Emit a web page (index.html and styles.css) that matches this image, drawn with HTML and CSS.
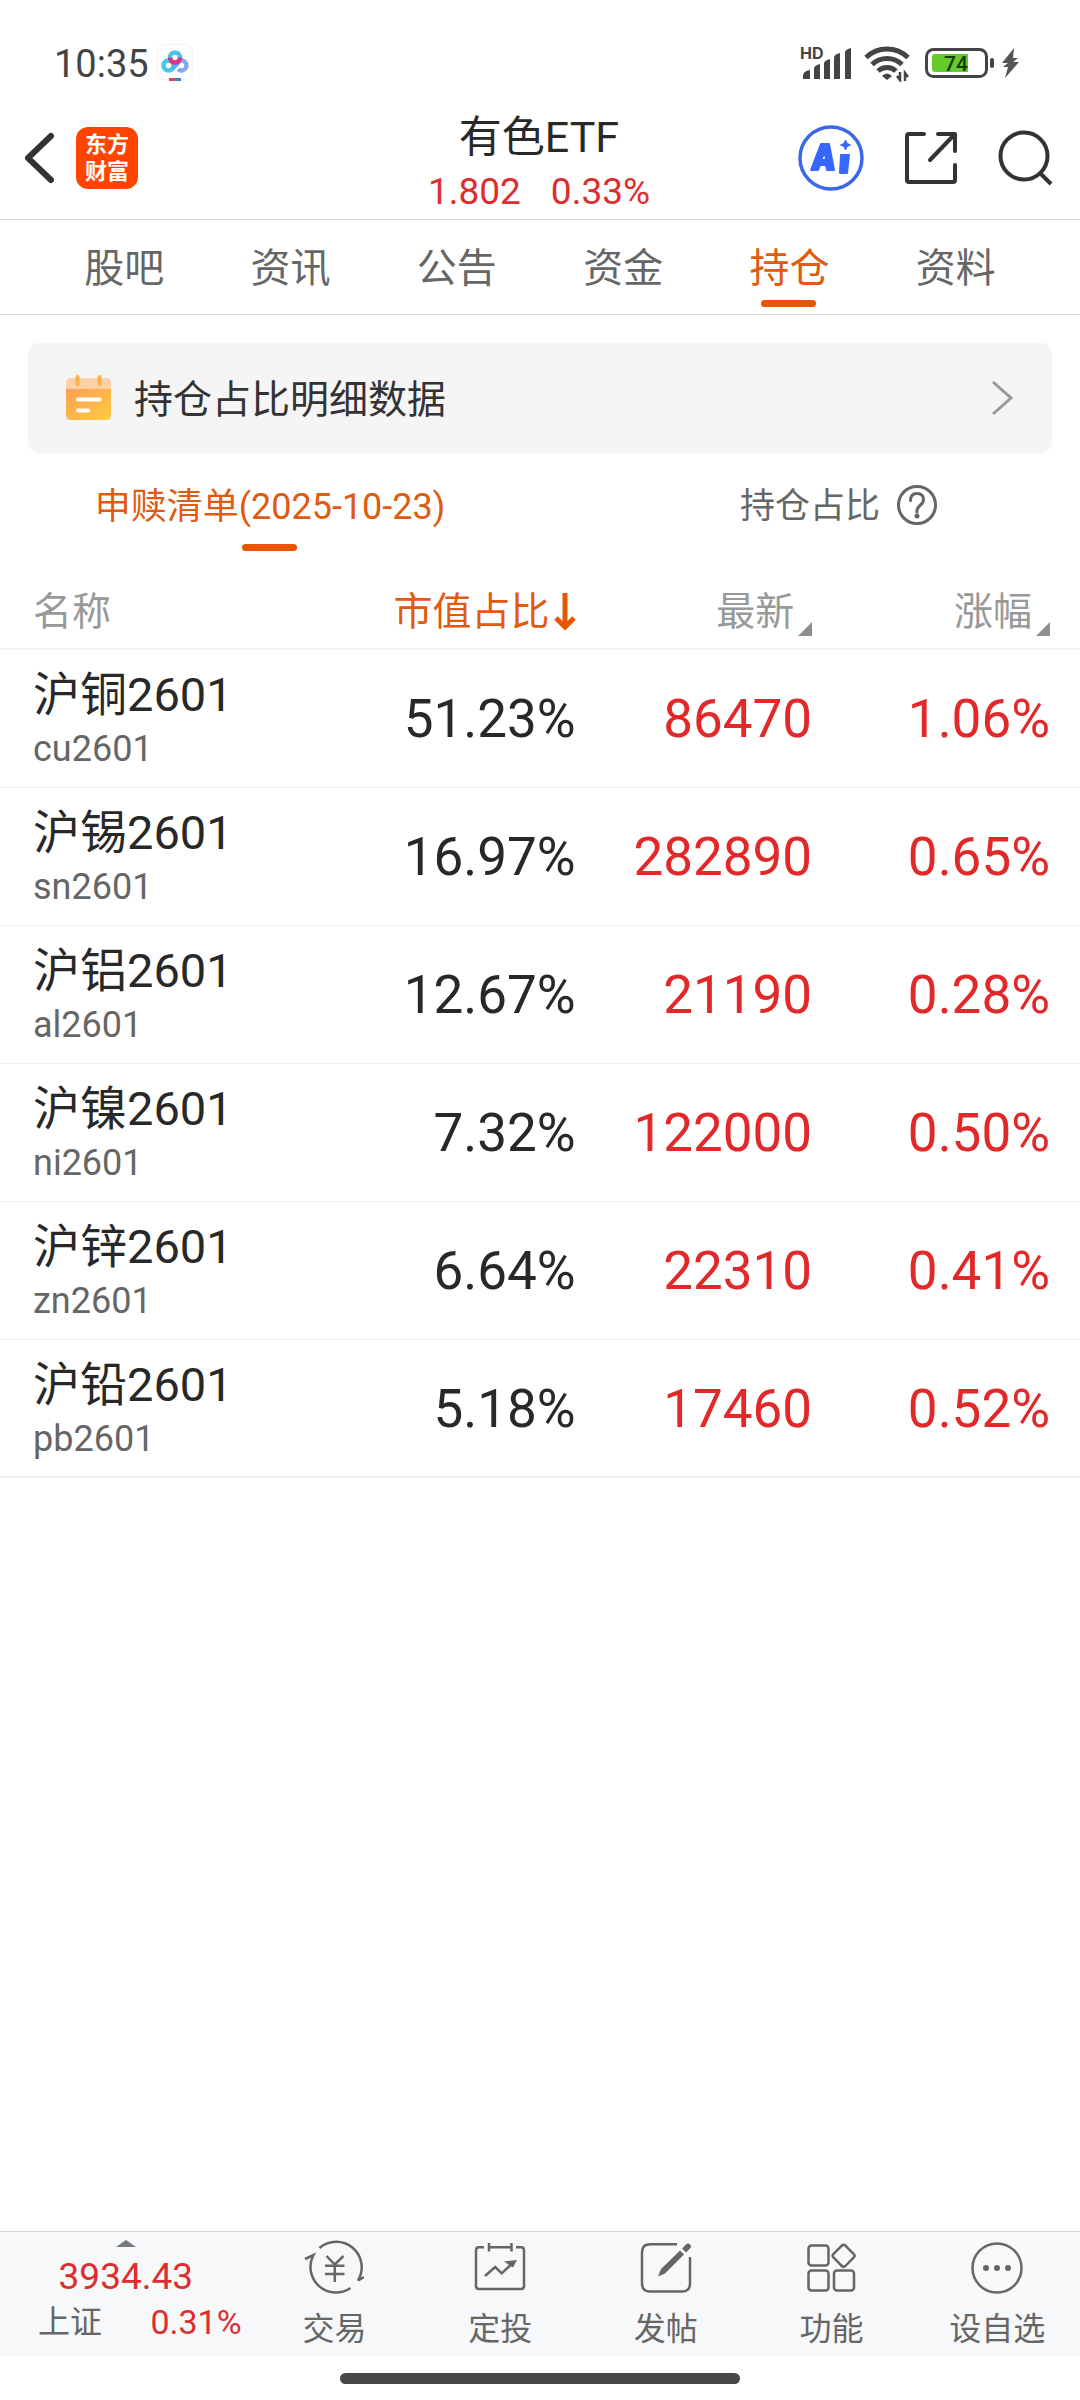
FILE: index.html
```html
<!DOCTYPE html>
<html lang="zh-CN">
<head>
<meta charset="utf-8">
<meta name="viewport" content="width=device-width, initial-scale=1">
<title>有色ETF</title>
<link rel="stylesheet" href="styles.css">
</head>
<body>
<div class="status">
  <span class="clock">10:35</span>
  <svg class="cloud" width="36" height="38" viewBox="0 0 36 38" fill="none" stroke-width="4.5" aria-hidden="true">
    <rect x=".5" y=".5" width="35" height="35" rx="6" stroke="#f3f3f3" stroke-width="1"/>
    <circle cx="11.5" cy="21.5" r="5" stroke="#45c8ec"/>
    <path d="M19.500 21.500a5 5 0 1 1 1.500 3.600" stroke="#86a8ee"/>
    <path d="M15 25l7-7" stroke="#4cb4ee"/>
    <circle cx="18" cy="13.500" r="5" stroke="#4fc4ea"/>
    <path d="M13 13.500a5 5 0 0 0 10 0" stroke="#e0337f"/>
    <path d="M12 35.500h6" stroke="#c9486f" stroke-width="3"/><path d="M18 35.500h6" stroke="#3586b8" stroke-width="3"/>
  </svg>
  <div class="status-icons">
    <svg width="53" height="38" viewBox="0 0 53 38" fill="#444" aria-hidden="true">
      <text class="hd" x="0" y="15">HD</text>
      <path d="M3 35v-3q0-5 7-6v9h-7zM14 35V24q1-3 6-4v15zM24 35V19q1-3 6-4v20zM34 35V13q1-3 6-4v26zM45 35V8q1-3 6-4v31z"/>
    </svg>
    <svg class="wifi" width="48" height="38" viewBox="0 0 48 38" fill="none" stroke="#444" stroke-width="5" aria-hidden="true">
      <path d="M3 13.500a30 30 0 0 1 42 0M9 20.500a21.500 21.500 0 0 1 30 0M15 27a13 13 0 0 1 18 0"/>
      <path d="M24 36l-5-4q5-5 10 0z" fill="#444" stroke="none"/>
      <path d="M37 28v8l-3-4M42 37v-8l3 4" stroke-width="2.500"/>
    </svg>
    <svg class="battery" width="70" height="38" viewBox="0 0 70 38" aria-hidden="true">
      <rect x="1.500" y="5.500" width="60" height="27" rx="7" fill="none" stroke="#444" stroke-width="3"/>
      <path d="M10 10h33v18H10q-3 0-3-3V13q0-3 3-3z" fill="#66c92c"/>
      <rect x="65" y="14" width="4" height="10" rx="2" fill="#444"/>
      <text class="level" x="19" y="27">74</text>
    </svg>
    <svg class="bolt" width="18" height="38" viewBox="0 0 18 38" fill="#555" aria-hidden="true"><path d="M13 4L1 19h6l-5 4h5L4 34l14-16h-6l5-4h-5z"/></svg>
  </div>
</div>

<header class="top">
  <div class="top-left">
    <button class="icon-btn" aria-label="返回"><svg width="32" height="54" viewBox="0 0 32 54" fill="none" stroke="#333" stroke-width="6" stroke-linecap="round" stroke-linejoin="round"><path d="M27 5L4 27l23 22"/></svg></button>
    <a class="logo" href="#home"><span>东方</span><span>财富</span></a>
  </div>
  <div class="quote">
    <h1>有色ETF</h1>
    <p class="quote-values"><span>1.802</span><span>0.33%</span></p>
  </div>
  <div class="top-right">
    <button class="icon-btn" aria-label="AI 助手"><svg width="66" height="66" viewBox="0 0 66 66">
      <circle cx="33" cy="33" r="31" fill="none" stroke="#3b68ea" stroke-width="3.500"/>
      <path d="M23 19h8l5 26h-7l-1-5h-6l-2 5h-7zM27 27l-4 8h5z" fill="#3768fb" fill-rule="evenodd" stroke="#3768fb" stroke-width="2" stroke-linejoin="round"/>
      <path d="M43 30h8l-2 18h-7z" fill="#3768fb" stroke="#3768fb" stroke-width="2" stroke-linejoin="round"/>
      <path d="M47.500 15l1.600 3.400 3.400 1.600-3.400 1.600-1.600 3.400-1.600-3.400-3.400-1.600 3.400-1.600z" fill="#3768fb" stroke="#3768fb" stroke-linejoin="round"/>
    </svg></button>
    <button class="icon-btn" aria-label="分享"><svg width="56" height="56" viewBox="0 0 56 56" fill="none" stroke="#333" stroke-width="4" stroke-linecap="round" stroke-linejoin="round"><path d="M21 4H6q-2 0-2 2v44q0 2 2 2h44q2 0 2-2V35M35 4h17v17M51 5L27 30"/></svg></button>
    <button class="icon-btn" aria-label="搜索"><svg width="56" height="56" viewBox="0 0 56 56" fill="none" stroke="#333" stroke-width="4"><circle cx="26" cy="26" r="23.500"/><path d="M42 43l11 11"/></svg></button>
  </div>
</header>

<nav class="tabs">
  <a href="#guba">股吧</a><a href="#news">资讯</a><a href="#notice">公告</a><a href="#funds">资金</a><a class="active" href="#holdings" aria-current="page">持仓</a><a href="#profile">资料</a>
</nav>

<main>
  <a class="detail" href="#detail">
    <svg width="45" height="46" viewBox="0 0 45 46" aria-hidden="true">
      <defs>
        <linearGradient id="sheet" x1="0" y1="0" x2="1" y2="1"><stop offset="0" stop-color="#ff9f55"/><stop offset="1" stop-color="#ffcb3e"/></linearGradient>
      </defs>
      <path d="M0 14V8q0-5 5-5h35q5 0 5 5v6z" fill="#ffcfa6"/>
      <path d="M0 14h45v26q0 5-5 5H5q-5 0-5-5z" fill="url(#sheet)"/>
      <path d="M11.500 2v7M33.500 2v7" stroke="#ffb14d" stroke-width="4" stroke-linecap="round"/>
      <path d="M12 24.500h21.500M12 35.500h10" stroke="#fff" stroke-width="4" stroke-linecap="round"/>
    </svg>
    <span>持仓占比明细数据</span>
    <svg class="chevron" width="22" height="36" viewBox="0 0 22 36" fill="none" stroke="#999" stroke-width="3"><path d="M1 2l18 16L1 34"/></svg>
  </a>

  <div class="subtabs">
    <button class="subtab active"><span class="subtab-text">申赎清单(2025-10-23)</span></button>
    <button class="subtab"><span class="subtab-text">持仓占比</span>
      <svg class="help" width="40" height="40" viewBox="0 0 40 40" fill="none" stroke="#666" stroke-width="3"><circle cx="20" cy="20" r="18.500"/><path d="M13.500 15.500q0-7 6.500-7t6.500 6q0 3-3.500 6t-3 6.500" stroke-linecap="round"/><circle cx="20" cy="31" r="2.500" fill="#666" stroke="none"/></svg>
    </button>
  </div>

  <table class="holdings">
    <colgroup><col class="c-name"><col class="c-weight"><col class="c-price"><col></colgroup>
    <thead>
      <tr>
        <th scope="col">名称</th>
        <th scope="col" aria-sort="descending"><button class="sort active">市值占比<svg class="arrow" width="22" height="38" viewBox="0 0 22 38" fill="none" stroke="#ea5504" stroke-width="5"><path d="M11 0v33M2 25l9 9 9-9"/></svg></button></th>
        <th scope="col"><button class="sort">最新<svg class="corner" width="14" height="14" viewBox="0 0 14 14"><path d="M14 0v14H0z" fill="#8e8f94"/></svg></button></th>
        <th scope="col"><button class="sort">涨幅<svg class="corner" width="14" height="14" viewBox="0 0 14 14"><path d="M14 0v14H0z" fill="#8e8f94"/></svg></button></th>
      </tr>
    </thead>
    <tbody>
      <tr><td><div class="name">沪铜2601</div><div class="code">cu2601</div></td><td>51.23%</td><td class="up">86470</td><td class="up">1.06%</td></tr>
      <tr><td><div class="name">沪锡2601</div><div class="code">sn2601</div></td><td>16.97%</td><td class="up">282890</td><td class="up">0.65%</td></tr>
      <tr><td><div class="name">沪铝2601</div><div class="code">al2601</div></td><td>12.67%</td><td class="up">21190</td><td class="up">0.28%</td></tr>
      <tr><td><div class="name">沪镍2601</div><div class="code">ni2601</div></td><td>7.32%</td><td class="up">122000</td><td class="up">0.50%</td></tr>
      <tr><td><div class="name">沪锌2601</div><div class="code">zn2601</div></td><td>6.64%</td><td class="up">22310</td><td class="up">0.41%</td></tr>
      <tr><td><div class="name">沪铅2601</div><div class="code">pb2601</div></td><td>5.18%</td><td class="up">17460</td><td class="up">0.52%</td></tr>
    </tbody>
  </table>
</main>

<footer class="bottom">
  <button class="index">
    <svg width="20" height="7" viewBox="0 0 20 7" aria-hidden="true"><path d="M10 0l10 7H0z" fill="#777980"/></svg>
    <span class="index-value">3934.43</span>
    <span class="index-row"><span>上证</span><span class="index-change">0.31%</span></span>
  </button>
  <button class="tool"><svg width="60" height="60" viewBox="0 0 60 60" fill="none" stroke="#666" stroke-width="2.500"><path d="M15.500 10A25.500 25.500 0 0 1 54 42.500l6-3.500M46.500 50A25.500 25.500 0 0 1 9.500 17L1 21"/><path d="M22.500 18l8.300 8.500L39.500 18M21 27.700h19.500M21 36h19.500M30.800 26v18"/></svg>交易</button>
  <button class="tool"><svg width="60" height="60" viewBox="0 0 60 60" fill="none" stroke="#666" stroke-width="2.500"><path d="M14 9.300H9q-3 0-3 3V48q0 3 3 3h42q3 0 3-3V12.300q0-3-3-3h-5M19 9.300h22.500M19 5v8.500M41.500 5v8.500M15 38l10.200-9 6.500 6.300 10-9.300"/><path d="M47 22l-13 1.500 9 6z" fill="#666" stroke="none"/></svg>定投</button>
  <button class="tool"><svg width="60" height="60" viewBox="0 0 60 60" fill="none" stroke="#666" stroke-width="2.500"><path d="M41 6.300H14q-8 0-8 8V45.500q0 8 8 8h32q8 0 8-8V19"/><path d="M22 38.500l3-7.500L44 12.500l4 4L29 35.500zM46 10.500l4-4q2-2 4 0t0 4l-4 4z" fill="#666" stroke="none"/></svg>发帖</button>
  <button class="tool"><svg width="60" height="60" viewBox="0 0 60 60" fill="none" stroke="#666" stroke-width="2.500"><rect x="7.500" y="7.500" width="20" height="20" rx="3"/><rect x="7.500" y="32.500" width="20" height="20" rx="3"/><rect x="33" y="32.500" width="20" height="20" rx="3"/><path d="M40.800 7.600q1.800-1.800 3.600 0l8.400 8.600q1.600 1.600 0 3.200l-8.400 8.600q-1.800 1.800-3.600 0l-8.400-8.600q-1.600-1.600 0-3.200z"/></svg>功能</button>
  <button class="tool"><svg width="60" height="60" viewBox="0 0 60 60" fill="none" stroke="#666" stroke-width="2.500"><circle cx="30" cy="30" r="24.500"/><g fill="#666" stroke="none"><circle cx="19" cy="30" r="3"/><circle cx="30" cy="30" r="3"/><circle cx="41" cy="30" r="3"/></g></svg>设自选</button>
</footer>
<div class="home-bar"><span></span></div>
</body>
</html>
```
FILE: styles.css
```css
* {
  box-sizing: border-box;
}

body {
  margin: 0;
  min-height: 100vh;
  display: flex;
  flex-direction: column;
  background: #fff;
  color: #282828;
  font-family: Roboto, "Noto Sans CJK SC", sans-serif;
}

button {
  margin: 0;
  padding: 0;
  border: 0;
  background: none;
  color: inherit;
  font: inherit;
}

a {
  color: inherit;
  text-decoration: none;
}

svg {
  display: block;
  flex: none;
}

/* Phone status bar */
.status {
  display: flex;
  align-items: center;
  height: 97px;
  padding: 29px 61px 0 54px;
}

.clock {
  padding-top: 2px;
  color: #444;
  font-size: 38px;
  line-height: 48px;
}

.cloud {
  margin-left: 8px;
}

.status-icons {
  display: flex;
  align-items: center;
  margin-left: auto;
}

.hd {
  font: 700 16px Inter, sans-serif;
}

.level {
  fill: #143c08;
  font: 500 21px Roboto, sans-serif;
}

.wifi {
  margin-left: 10px;
}

.battery {
  margin-left: 14px;
}

.bolt {
  margin-left: 6px;
}

/* Title bar */
.top {
  display: grid;
  grid-template-columns: 1fr auto 1fr;
  align-items: center;
  height: 123px;
  padding: 0 26px 0 24px;
  border-bottom: 1px solid #d8d8d8;
}

.top-left {
  display: flex;
  align-items: center;
  gap: 20px;
}

.logo {
  display: flex;
  flex-direction: column;
  align-items: center;
  justify-content: center;
  width: 62px;
  height: 62px;
  border-radius: 12px;
  background: #ff4400;
  color: #fff;
  font-size: 22px;
  font-weight: 700;
  line-height: 27px;
}

.quote {
  padding-top: 12px;
  text-align: center;
}

.quote h1 {
  margin: 0;
  font-size: 43px;
  font-weight: 400;
  line-height: 56px;
}

.quote-values {
  display: flex;
  justify-content: center;
  gap: 30px;
  margin: 0;
  color: #dc2e2e;
  font-size: 37px;
  line-height: 54px;
}

.top-right {
  display: flex;
  align-items: center;
  justify-content: flex-end;
  gap: 39px;
}

/* Section tabs */
.tabs {
  display: flex;
  height: 95px;
  padding: 0 41px;
  border-bottom: 1px solid #d8d8d8;
}

.tabs a {
  position: relative;
  flex: 1;
  padding-top: 3px;
  color: #666;
  font-size: 40px;
  line-height: 91px;
  text-align: center;
}

.tabs .active,
.subtab.active {
  color: #e05a10;
}

.tabs .active::after,
.subtab.active::after {
  content: "";
  position: absolute;
  bottom: 7px;
  left: 50%;
  width: 55px;
  height: 7px;
  margin-left: -28px;
  border-radius: 4px;
  background: #ea5504;
}

main {
  flex: 1;
}

.detail {
  display: flex;
  align-items: center;
  height: 110px;
  margin: 28px 28px 0;
  padding: 0 38px;
  border-radius: 11px;
  background: #f5f5f5;
  color: #333;
  font-size: 39px;
}

.detail span {
  margin-left: 23px;
  padding-bottom: 4px;
}

.chevron {
  margin-left: auto;
}

.subtabs {
  display: flex;
}

.subtab {
  position: relative;
  flex: 1;
  display: grid;
  grid-template-columns: 1fr auto 1fr;
  align-items: center;
  height: 105px;
  padding-bottom: 2px;
  color: #666;
  font-size: 35px;
}

.subtab.active {
  font-size: 36px;
}

.subtab-text {
  grid-column: 2;
  padding-bottom: 4px;
}

.help {
  margin-left: 17px;
}

/* Holdings */
.holdings {
  width: 100%;
  table-layout: fixed;
  border-collapse: collapse;
}

.c-name {
  width: 30%;
}

.c-weight {
  width: 23.3%;
}

.c-price {
  width: 21.9%;
}

.holdings th {
  height: 91px;
  padding: 18px 0 0;
  border-bottom: 2px solid #f4f4f4;
  color: #999;
  font-size: 39px;
  font-weight: 400;
  line-height: 48px;
}

.holdings td {
  height: 138px;
  padding: 2px 0 0;
  border-bottom: 1px solid #eee;
  font-size: 53px;
  text-align: right;
}

.holdings tbody tr:last-child td {
  border-bottom: 2px solid #eee;
}

.holdings th:first-child,
.holdings td:first-child {
  padding-left: 33px;
  text-align: left;
}

.holdings th:last-child,
.holdings td:last-child {
  padding-right: 30px;
}

.sort {
  display: flex;
  align-items: center;
  margin-left: auto;
}

.sort.active {
  color: #e05a10;
}

.arrow {
  margin-left: 4px;
}

.corner {
  align-self: flex-end;
  margin-left: 4px;
}

.name {
  font-size: 47px;
  line-height: 60px;
}

.code {
  color: #666;
  font-size: 36px;
  line-height: 48px;
}

.holdings .up {
  color: #e22828;
}

/* Bottom toolbar */
.bottom {
  display: flex;
  height: 125px;
  border-top: 1px solid #d3d5d8;
  background: #f7f8fa;
  color: #666;
  font-size: 32px;
}

.index {
  flex: 0 0 23.3%;
  display: flex;
  flex-direction: column;
  align-items: center;
  padding-top: 8px;
}

.index-value {
  color: #dc2e2e;
  font-size: 37px;
  line-height: 60px;
}

.index-row {
  align-self: stretch;
  display: flex;
  justify-content: space-between;
  padding: 0 10px 0 38px;
  line-height: 30px;
}

.index-change {
  color: #dc2e2e;
  font-size: 34px;
}

.tool {
  flex: 1;
  display: flex;
  flex-direction: column;
  align-items: center;
  gap: 13px;
  padding-top: 6px;
  line-height: 36px;
}

.home-bar {
  display: flex;
  justify-content: center;
  height: 44px;
  padding-top: 17px;
}

.home-bar span {
  width: 37%;
  height: 11px;
  border-radius: 6px;
  background: #464646;
}
```
